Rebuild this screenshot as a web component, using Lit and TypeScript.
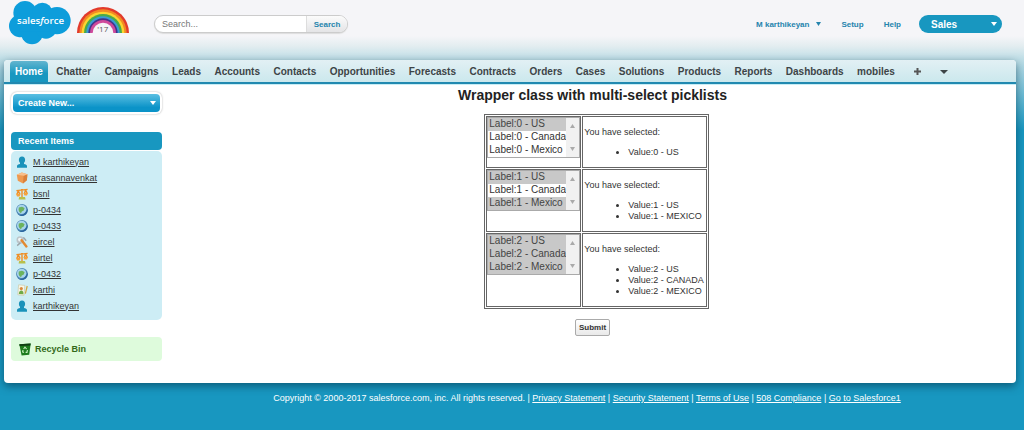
import { LitElement, html, svg, css } from "lit";
import { customElement } from "lit/decorators.js";

const TABS = [
  "Home", "Chatter", "Campaigns", "Leads", "Accounts", "Contacts", "Opportunities", "Forecasts",
  "Contracts", "Orders", "Cases", "Solutions", "Products", "Reports", "Dashboards", "mobiles",
];

type Kind = "user" | "folder" | "scales" | "globe" | "key" | "lead";

const RECENT: { kind: Kind; name: string }[] = [
  { kind: "user", name: "M karthikeyan" },
  { kind: "folder", name: "prasannavenkat" },
  { kind: "scales", name: "bsnl" },
  { kind: "globe", name: "p-0434" },
  { kind: "globe", name: "p-0433" },
  { kind: "key", name: "aircel" },
  { kind: "scales", name: "airtel" },
  { kind: "globe", name: "p-0432" },
  { kind: "lead", name: "karthi" },
  { kind: "user", name: "karthikeyan" },
];

const COUNTRIES = ["US", "Canada", "Mexico"];
const ROWS = [["US"], ["US", "Mexico"], ["US", "Canada", "Mexico"]];
const FOOTER_LINKS = ["Privacy Statement", "Security Statement", "Terms of Use", "508 Compliance", "Go to Salesforce1"];

const ICONS = {
  user: svg`<path fill="#1a92ba" d="M6 .4c2.100 0 3.100 1.400 3.100 3.300 0 1.500-.5 2.500-1.100 3.100v1.200c1.600.3 3 .9 3 2.200v1.600H1v-1.600c0-1.300 1.400-1.900 3-2.200V6.800C3.400 6.200 2.900 5.200 2.900 3.700 2.900 1.800 3.900.4 6 .4z"/>`,
  folder: svg`<path fill="#ee9a50" d="M.8 2.800 5.800.6l5.600 1.600-.5 6-3.900 3.400L1.800 8.800z"/><path fill="#d9803a" d="m7.600 3.800 3.800-1.600-.5 6-3.900 3.400z"/><path fill="#f8c08c" d="M.8 2.800 5.800.6l5.600 1.600-3.800 1.600z"/>`,
  scales: svg`<g fill="none" stroke="#ee8f27" stroke-width="1.400"><path d="M.4 2.600 11.600 1.400M6 1V9M2.300 2.800.9 6.400M2.300 2.800l1.600 3.600M9.700 2 8.300 5.800M9.700 2l1.600 3.800"/></g><path fill="#f6a33c" d="M0 5.800h4.600L3.600 8.400H1zM7.400 5h4.600l-1 2.600H8.400z"/><path fill="#b8c04a" d="M3.200 9h5.800l.6 2.400H2.600z"/>`,
  globe: svg`<circle cx="6" cy="6" r="5.900" fill="#4b86b4"/><circle cx="5.600" cy="5.400" r="4.700" fill="#a7d4ec"/><path fill="#6cb35d" d="M2.800 3.600 6 2.800l2.600 1.200-.8 2.600-2 1-.8 1.600-1.600-1.200-.8-2z"/><path fill="#2b659e" d="M11.600 4.800A5.900 5.900 0 0 1 2.800 11c3.800.6 7-1.600 8.800-6.200z"/>`,
  key: svg`<circle cx="4.200" cy="4" r="3.700" fill="#bcc4c8"/><circle cx="3.800" cy="3.600" r="1.800" fill="#eef5f7"/><path stroke="#e28a31" stroke-width="2.400" stroke-linecap="round" d="m5.600 4.200 4.800 6.200"/><path stroke="#9aa3a7" stroke-width="1.400" d="m1.200 9.600 3.200-2.800M7.400 1.400l2.800 3.400"/>`,
  lead: svg`<path fill="#f7f6e6" stroke="#c8c5a0" stroke-width=".6" d="m2.600.8 6.200.6-.8 10-6.200-.6z"/><circle cx="5.300" cy="4.600" r="1.600" fill="#d8893e"/><path fill="#6faa47" d="M2.800 10c.1-2.400 1-3.600 2.500-3.600S7.600 7.600 7.400 10.200z"/><path stroke="#d3a53a" stroke-width="1.200" d="M11.200 2 9.400 9.600"/>`,
};

const downArrow = (size: number) =>
  html`<svg width=${size} height="4" viewBox="0 0 7 4" preserveAspectRatio="none" aria-hidden="true"><path fill="currentColor" d="M0 0h7L3.500 4z" /></svg>`;

@customElement("app-root")
export class AppRoot extends LitElement {
  static styles = css`
    :host {
      display: block;
      min-height: 100vh;
      box-sizing: border-box;
      font: 9px/11px "Liberation Sans", Arial, sans-serif;
      color: #333;
      background: #1897c0 linear-gradient(#f5f5f8 0, #f5f5f8 36px, #e3edf0 46px, #bcdde6 60px, #1897c0 130px) no-repeat;
    }
    * { box-sizing: border-box; }
    button, input, select { font: inherit; color: inherit; margin: 0; border: 0; border-radius: 0; outline: 0; }
    button { padding: 0; background: none; }
    a { color: inherit; }
    svg { display: block; flex: none; }

    .top { display: flex; align-items: center; height: 48px; padding: 0 22px 0 9px; margin-bottom: 12px; }
    .cloud-text { font: 600 29px "Open Sans", sans-serif; fill: #fff; }
    .logo { align-self: flex-start; display: flex; align-items: flex-end; gap: 5px; }
    .logo .rainbow { margin-bottom: 12px; }
    .year { font: 24px "Open Sans", sans-serif; fill: #555; }
    .search {
      display: flex; width: 194px; height: 18px; margin-left: 24px;
      border: 1px solid #ccc; border-radius: 9px; background: #fff; overflow: hidden;
      box-shadow: 0 1px 1px #ddd;
    }
    .search input { flex: 1; min-width: 0; padding: 0 7px; background: none; }
    .search input::placeholder { color: #777; opacity: 1; }
    .search button { width: 41px; font-size: 8px; font-weight: bold; color: #2584ad; background: linear-gradient(#fbfbfb, #e4e4e6); border-left: 1px solid #ddd; }
    .links { display: flex; align-items: center; gap: 20px; margin-left: auto; font-size: 8px; font-weight: bold; color: #2584ad; }
    .links a { text-decoration: none; }
    .links button { display: flex; align-items: center; gap: 7px; }
    .app-menu {
      display: flex; align-items: center; justify-content: space-between;
      width: 83px; height: 18px; margin-left: 18px; padding: 0 5px 0 12px; border-radius: 9px;
      background: #1897c0; color: #fff; font-size: 10px; font-weight: bold;
    }

    .panel {
      margin: 0 8px 0 4px; background: #fff; border-radius: 4px;
      box-shadow: 0 3px 8px rgba(0, 40, 60, 0.55);
    }
    .tabs {
      display: flex; align-items: center; height: 24px; padding: 1px 6px 0;
      background: linear-gradient(#e2f0f4, #cbe8ed); border-bottom: 2px solid #2189b0;
      border-radius: 4px 4px 0 0; box-shadow: 0 1px 0 #c8edf5;
      font-size: 10px; font-weight: bold;
    }
    .tab-list { display: flex; flex: 1; justify-content: space-between; max-width: 890px; }
    .tabs a { height: 21px; padding: 0 5px; line-height: 21px; text-decoration: none; white-space: nowrap; color: #3d4447; }
    .tabs .current { color: #fff; background: linear-gradient(#62b5cf, #1897c0 60%); border-radius: 4px 4px 0 0; }
    .tabs button { display: flex; padding: 0 5px; margin-left: 9px; color: #3d4447; }

    .body { display: grid; grid-template-columns: 158px 1fr; gap: 7px; padding-bottom: 22px; }
    .side { padding: 8px 0 0 7px; }
    .create { width: 151px; padding: 2px; border-radius: 6px; box-shadow: 0 0 2px #aaa; background: #fff; }
    .create button {
      display: flex; align-items: center; justify-content: space-between; width: 100%; height: 18px;
      padding: 0 4px 0 5px; border-radius: 4px; color: #fff; font-weight: bold;
      background: linear-gradient(#5bbfe2, #0b93c8 75%);
    }
    h2 { margin: 0; }
    .side h2 { margin-top: 18px; padding: 0 7px; font-size: 9px; line-height: 18px; color: #fff; background: #1897c0; border-radius: 4px; }
    .recent { margin: 1px 0 17px; padding: 3px 5px 6px; list-style: none; background: #cdedf5; border-radius: 5px; }
    .recent li { display: flex; align-items: center; gap: 5px; height: 16px; }
    .recycle {
      display: flex; align-items: center; gap: 4px; height: 24px; padding: 1px 8px 0; border-radius: 4px;
      background: #defbdc; color: #33691a; font-weight: bold; text-decoration: none;
    }

    .main { display: flex; flex-direction: column; align-items: center; padding-top: 2px; }
    .main h2 { font-size: 14px; line-height: 18px; color: #222; margin-bottom: 10px; }
    table { margin-left: 8px; border: 1px solid #666; border-spacing: 1px; }
    td { border: 1px solid #666; padding: 0; vertical-align: top; }
    .choices { display: flex; width: 93px; border: 1px solid #aaa; }
    select { flex: 1; min-width: 0; height: 39px; padding: 0; overflow: hidden; background: #fff; font-size: 10px; color: #333; }
    option { height: 13px; min-height: 13px; padding: 0 1px; line-height: 13px; }
    option:checked { background: #c8c8c8 linear-gradient(#c8c8c8, #c8c8c8); color: #444; }
    .bar { display: flex; flex-direction: column; justify-content: space-between; align-items: center; width: 13px; padding: 6px 0; background: #f1f1f1; color: #aaa; }
    .up { transform: rotate(180deg); }
    .result { padding: 10px 2px 9px 1px; }
    .result p { margin: 0 0 9px; }
    .result ul { margin: 0; padding-left: 44px; }
    .submit {
      margin-top: 10px; width: 35px; height: 17px; font-size: 8px; font-weight: bold;
      border: 1px solid #aaa; border-radius: 2px; background: linear-gradient(#fff, #e9e9e9);
    }
    footer { padding: 10px 0; margin-left: 150px; text-align: center; color: #fff; }
  `;

  render() {
    return html`
      <header class="top">
        <div class="logo">
          <svg width="62" height="45" viewBox="28 0 186 135">
            <g fill="#0d9ddb">
              <circle cx="76" cy="38" r="35" /><circle cx="128" cy="38" r="30" /><circle cx="172" cy="62" r="41" />
              <circle cx="62" cy="78" r="34" /><circle cx="97" cy="100" r="33" /><circle cx="139" cy="84" r="32" />
              <path d="M60 40h90v55H60z" />
            </g>
            <text class="cloud-text" x="52" y="73">sales<tspan font-style="italic">f</tspan>orce</text>
          </svg>
          <svg class="rainbow" width="54" height="26" viewBox="0 0 160 78">
            ${[["#e23a2c", 78], ["#f28a24", 71], ["#fbd52f", 64], ["#49ab4a", 57], ["#3a9bd4", 50], ["#41338a", 44], ["#cf4a9c", 39], ["#f5f5f8", 31]].map(
              ([fill, r]) => svg`<circle cx="80" cy="78" r=${r} fill=${fill} />`,
            )}
            <text class="year" x="63" y="76">'17</text>
          </svg>
        </div>
        <form class="search" @submit=${(e: Event) => e.preventDefault()}>
          <input type="text" placeholder="Search..." aria-label="Search" />
          <button>Search</button>
        </form>
        <nav class="links">
          <button>M karthikeyan ${downArrow(5)}</button>
          <a href="#">Setup</a>
          <a href="#">Help</a>
        </nav>
        <button class="app-menu">Sales ${downArrow(6)}</button>
      </header>

      <div class="panel">
        <nav class="tabs">
          <div class="tab-list">
            ${TABS.map((t, i) => html`<a href="#" class=${i === 0 ? "current" : ""}>${t}</a>`)}
          </div>
          <button aria-label="All tabs">
            <svg width="7" height="7" viewBox="0 0 7 7"><path fill="#555" d="M2.500 0h2v2.500H7v2H4.500V7h-2V4.500H0v-2h2.500z" /></svg>
          </button>
          <button aria-label="More tabs">${downArrow(8)}</button>
        </nav>
        <div class="body">
          <aside class="side">
            <div class="create"><button>Create New... ${downArrow(6)}</button></div>
            <h2>Recent Items</h2>
            <ul class="recent">
              ${RECENT.map(
                (r) => html`<li><svg width="12" height="12" viewBox="0 0 12 12" fill="none">${ICONS[r.kind]}</svg><a href="#">${r.name}</a></li>`,
              )}
            </ul>
            <a class="recycle" href="#">
              <svg width="12" height="13" viewBox="0 0 12 13">
                <path fill="#1d7b1d" d="M.3 1.200 11.700.6l-1.500 11.200-7.600.8z" />
                <path fill="#0f3d12" d="M.3 1.200 11.700.6l-.3 1.800-10.700.5z" />
                <path fill="none" stroke="#c9f0bf" stroke-width="1.100" d="m4.600 6 1.400-1.800L7.600 6M8.400 7 8 9.400H6.600M5 9.400 3.600 8.800 4 7" />
              </svg>
              Recycle Bin
            </a>
          </aside>
          <main class="main">
            <h2>Wrapper class with multi-select picklists</h2>
            <table>
              ${ROWS.map(
                (picked, n) => html`<tr>
                  <td>
                    <div class="choices">
                      <select multiple size="3" aria-label="Countries ${n}">
                        ${COUNTRIES.map((c) => html`<option ?selected=${picked.includes(c)}>Label:${n} - ${c}</option>`)}
                      </select>
                      <div class="bar"><span class="up">${downArrow(5)}</span>${downArrow(5)}</div>
                    </div>
                  </td>
                  <td class="result">
                    <p>You have selected:</p>
                    <ul>${picked.map((c) => html`<li>Value:${n} - ${c.toUpperCase()}</li>`)}</ul>
                  </td>
                </tr>`,
              )}
            </table>
            <button class="submit">Submit</button>
          </main>
        </div>
      </div>
      <footer>
        Copyright © 2000-2017 salesforce.com, inc. All rights reserved.
        ${FOOTER_LINKS.map((l) => html`| <a href="#">${l}</a> `)}
      </footer>
    `;
  }
}
